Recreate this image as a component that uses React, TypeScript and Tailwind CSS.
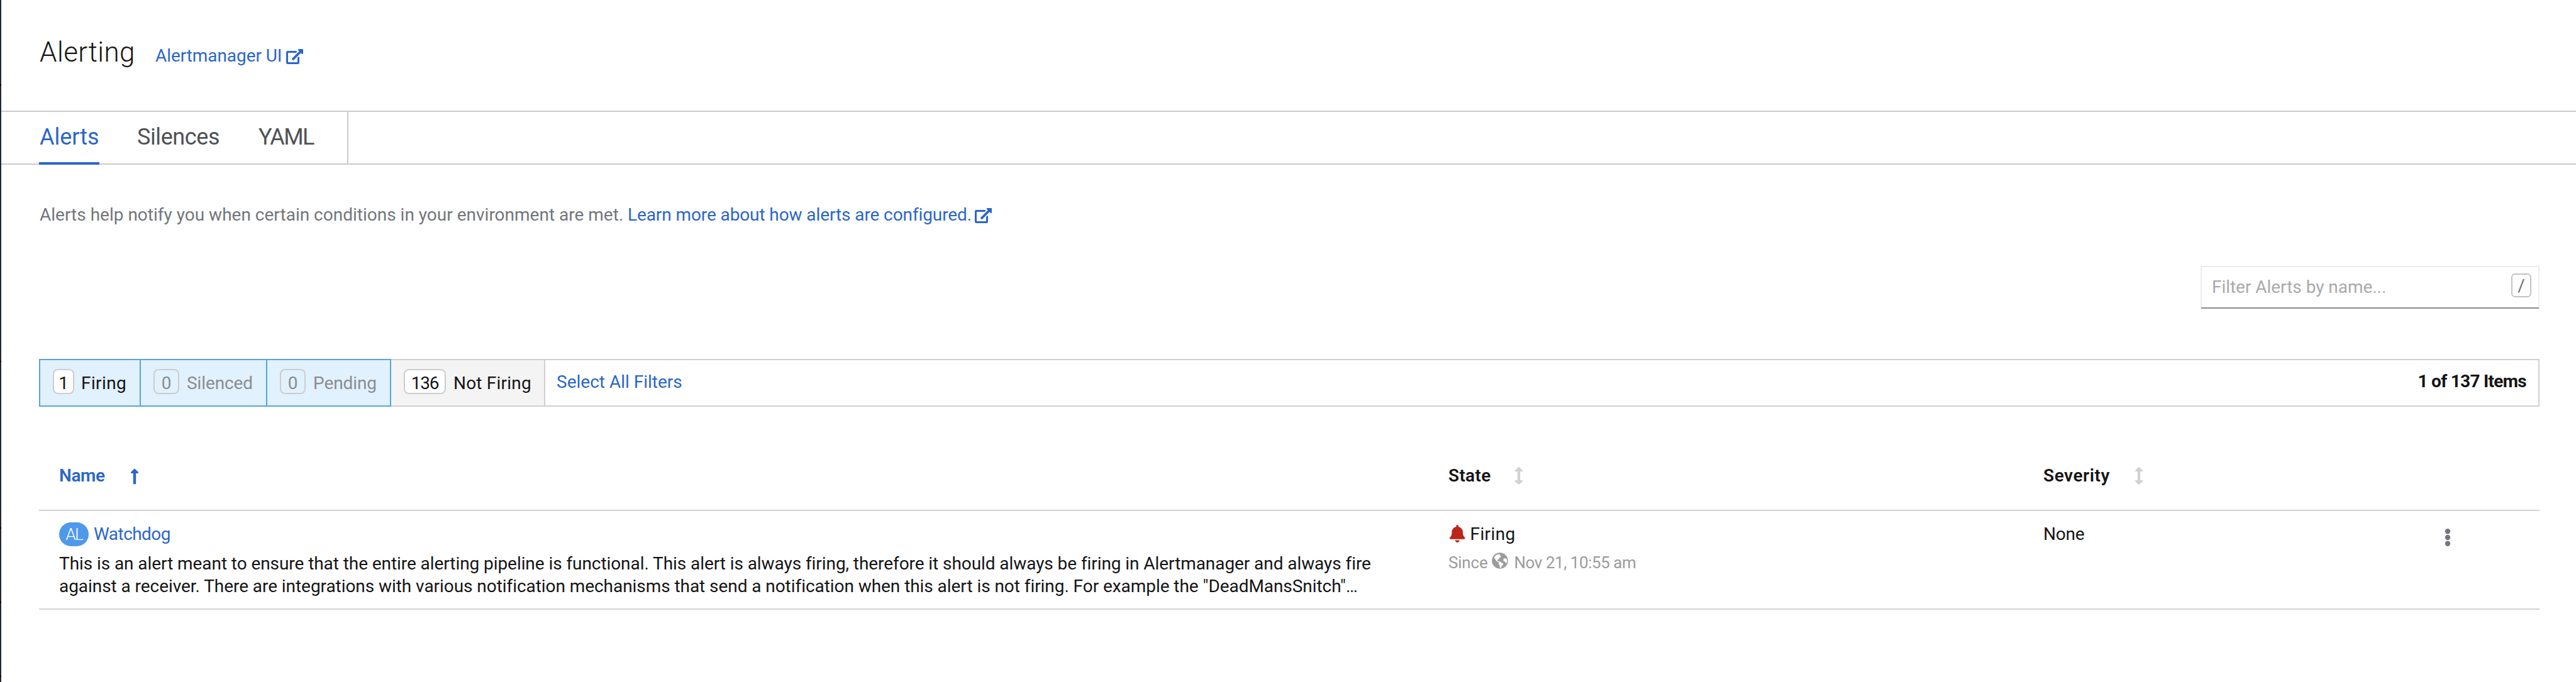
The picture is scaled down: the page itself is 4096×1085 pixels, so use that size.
import type { ReactNode } from 'react';
import { FaArrowsAltV, FaBell, FaLongArrowAltUp } from 'react-icons/fa';

function ExternalLinkIcon({ className }: { className: string }) {
  return (
    <svg viewBox="0 0 576 512" fill="currentColor" className={'h-[24px] w-[27px] shrink-0 ' + className}>
      <path d="M576 24v127.984c0 21.461-25.96 31.98-40.971 16.971l-35.707-35.709-243.523 243.523c-9.373 9.373-24.568 9.373-33.941 0l-22.627-22.627c-9.373-9.373-9.373-24.569 0-33.941L442.756 76.676l-35.703-35.705C391.982 25.9 402.656 0 424.024 0H552c13.255 0 24 10.745 24 24zM407.029 270.794l-16 16A23.999 23.999 0 0 0 384 303.765V448H64V128h264a24.003 24.003 0 0 0 16.97-7.029l16-16C376.089 89.851 365.381 64 344 64H48C21.49 64 0 85.49 0 112v352c0 26.51 21.49 48 48 48h352c26.51 0 48-21.49 48-48V287.764c0-21.382-25.852-32.09-40.971-16.97z" />
    </svg>
  );
}

function GlobeIcon() {
  return (
    <svg viewBox="0 0 26 26" className="ml-[6px] mt-[4px] h-[26px] w-[26px] shrink-0">
      <circle cx="13" cy="13" r="12.8" fill="#9c9c9c" />
      <path
        fill="#fff"
        d="M4.6 6.4 7 4l3.2-1.2 3.2.6-.6 1.6 1.8.2-.6 2.2-2.4 1 .2 1.6-2.4 1.4-.4 1.8 1.4.8 2.4.2 3.4 2.2 2.2 1-.6 2.4-1.6 1.2-.8 2.2-1.6 1.4-1-.8-.4-3.6-1.6-2 .4-2.4-2.6-1.4-2.2-2.2-1.8-3.4-.6 1.4-.2-1.6z"
      />
      <path fill="#fff" d="m18.6 10.6 2.2-1.4 2.4.4 1 2.2.2 3-1.4 2.2-1.2-.4-.6-2-2-.8-1-1.6z" />
    </svg>
  );
}

const badge = 'flex h-[40px] items-center justify-center rounded-[8px] border-2 border-[#cdcdcd] pt-[5px] leading-[36px] ';

function Filter({ count, label, cell, countClass, labelClass }: { count: string; label: string; cell: string; countClass: string; labelClass: string }) {
  return (
    <div className={'flex h-[76px] shrink-0 border-y-2 pt-[14px] ' + cell}>
      <span className={badge + countClass}>{count}</span>
      <span className={'leading-[45px] ' + labelClass}>{label}</span>
    </div>
  );
}

function Row({ className, children }: { className: string; children: ReactNode }) {
  return <div className={'flex w-[3976px] border-b-2 border-[#d2d2d2] ' + className}>{children}</div>;
}

export default function App() {
  return (
    <div className="flex h-[1085px] w-[4096px] overflow-hidden bg-white font-[Roboto,sans-serif] text-[28px] text-[#151515] whitespace-nowrap">
      <div className="flex w-[2px] shrink-0 flex-col bg-[#212830]">
        <div className="mt-[134px] h-[2px] bg-black" />
        <div className="mt-[438px] h-[2px] bg-black" />
        <div className="mt-[263px] h-[2px] bg-black" />
        <div className="mt-[116px] h-[2px] bg-black" />
        <div className="mt-[116px] h-[2px] bg-black" />
      </div>

      <div className="flex w-[4094px] flex-col">
        <header className="flex h-[176px] items-baseline pl-[61px] pt-[53px]">
          <h1 className="w-[184px] text-[44px] font-light leading-[60px] tracking-[0.4px]">Alerting</h1>
          <a className="flex text-[#2b66c9]">
            <span className="w-[208px] leading-[36px] tracking-[-0.08px]">Alertmanager UI</span>
            <ExternalLinkIcon className="mt-[7px]" />
          </a>
        </header>

        <nav className="flex h-[86px] border-y-2 border-[#cbcbcb] text-[36px] leading-[74px] text-[#4f5255]">
          <div className="flex w-[552px] shrink-0 border-r-2 border-[#cbcbcb] pl-[60px]">
            <div className="-mb-[2px] h-[84px] w-[96px] border-b-4 border-[#2b66c9] pl-[1px] pt-[3px] tracking-[-0.04px] text-[#2b66c9]">Alerts</div>
            <div className="ml-[60px] w-[131px] pt-[3px] tracking-[-0.4px]">Silences</div>
            <div className="ml-[62px] pt-[3px] tracking-[-1.6px]">YAML</div>
          </div>
        </nav>

        <p className="mt-[62px] flex h-[36px] pl-[61px] leading-[36px]">
          <span className="w-[935px] text-[#72767b]">Alerts help notify you when certain conditions in your environment are met.</span>
          <a className="flex text-[#2b66c9]">
            <span className="w-[552px] tracking-[-0.1px]">Learn more about how alerts are configured.</span>
            <ExternalLinkIcon className="mt-[7px]" />
          </a>
        </p>

        <div className="mt-[63px] ml-[3497px] flex h-[68px] w-[539px] border-2 border-[#ededed] border-b-[#8a8a8a] pl-[16px]">
          <span className="w-[476px] pt-[12px] leading-[40px] tracking-[-0.04px] text-[#aaaaaa]">Filter Alerts by name...</span>
          <kbd className="mt-[10px] flex h-[38px] w-[32px] justify-center rounded-[6px] border-2 border-[#c2c2c2] font-[Roboto,sans-serif] leading-[36px] text-[#6a6e73]">/</kbd>
        </div>

        <div className="mt-[80px] ml-[60px] flex h-[76px] w-[3976px]">
          <Filter count="1" label="Firing" cell="w-[162px] border-x-2 border-[#5aa4d9] bg-[#e1f1fe] pl-[20px]" countClass="w-[34px] bg-white" labelClass="ml-[11px] tracking-[0.4px]" />
          <Filter count="0" label="Silenced" cell="w-[201px] border-r-2 border-[#5aa4d9] bg-[#e1f1fe] pl-[20px] text-[#8b8d8f]" countClass="w-[41px]" labelClass="ml-[12px] tracking-[-0.1px]" />
          <Filter count="0" label="Pending" cell="w-[197px] border-r-2 border-[#5aa4d9] bg-[#e1f1fe] pl-[20px] text-[#8b8d8f]" countClass="w-[41px]" labelClass="ml-[12px] tracking-[-0.1px]" />
          <Filter count="136" label="Not Firing" cell="w-[245px] border-r-2 border-[#d0d0d0] bg-[#f4f4f4] pl-[20px]" countClass="w-[67px] bg-white tracking-[-1.2px]" labelClass="ml-[12px] tracking-[0.2px]" />
          <div className="flex flex-1 justify-between border-y-2 border-r-2 border-[#d0d0d0] pt-[14px] pl-[18px] pr-[19px] leading-[40px]">
            <a className="leading-[41px] text-[#2b66c9]">Select All Filters</a>
            <span className="font-bold tracking-[-0.7px]">1 of 137 Items</span>
          </div>
        </div>

        <div className="ml-[60px]">
          <Row className="h-[166px] pt-[92px] font-semibold leading-[36px]">
            <div className="flex w-[2241px] shrink-0 pl-[32px] text-[#2b66c9]">
              <span className="w-[113px] tracking-[-0.4px]">Name</span>
              <FaLongArrowAltUp className="mt-[5px] h-[28px] w-[14px]" />
            </div>
            <div className="flex w-[946px] shrink-0">
              <span className="w-[105px] tracking-[0.3px]">State</span>
              <FaArrowsAltV className="mt-[4px] h-[28px] w-[14px] text-[#d2d2d2]" />
            </div>
            <div className="flex">
              <span className="w-[145px] tracking-[0.55px]">Severity</span>
              <FaArrowsAltV className="mt-[4px] h-[28px] w-[14px] text-[#d2d2d2]" />
            </div>
          </Row>

          <Row className="h-[157px] pt-[18px]">
            <div className="w-[2241px] shrink-0 pl-[32px]">
              <div className="flex h-[38px]">
                <span className="flex h-[38px] w-[47px] justify-center rounded-[19px] bg-[#4f99ec] pl-[1px] text-[26px] font-light leading-[38px] tracking-[-1.5px] text-white">AL</span>
                <a className="ml-[8px] leading-[37px] tracking-[-0.55px] text-[#2b66c9]">Watchdog</a>
              </div>
              <p className="mt-[10px] leading-[36px]">
                <span className="block tracking-[-0.073px]">
                  This is an alert meant to ensure that the entire alerting pipeline is functional. This alert is always firing, therefore it should always be firing in Alertmanager and always fire
                </span>
                <span className="block tracking-[-0.06px]">
                  against a receiver. There are integrations with various notification mechanisms that send a notification when this alert is not firing. For example the "DeadMansSnitch"…
                </span>
              </p>
            </div>
            <div className="w-[946px] shrink-0">
              <div className="flex leading-[37px]">
                <FaBell className="mt-[4px] ml-[2px] h-[28px] w-[24.5px] text-[#bb2619]" />
                <span className="ml-[8px] tracking-[0.4px]">Firing</span>
              </div>
              <div className="mt-[7px] flex text-[26px] leading-[40px] text-[#9c9c9c]">
                <span className="tracking-[-0.2px]">Since</span>
                <GlobeIcon />
                <span className="ml-[10px] tracking-[-0.46px]">Nov 21, 10:55 am</span>
              </div>
            </div>
            <div className="w-[639px] shrink-0 leading-[37px] tracking-[-0.2px]">None</div>
            <svg viewBox="0 0 8 28" fill="#73767b" className="mt-[10px] h-[28px] w-[8px] overflow-visible">
              <circle cx="4" cy="4.3" r="4.2" />
              <circle cx="4" cy="14" r="4.2" />
              <circle cx="4" cy="23.7" r="4.2" />
            </svg>
          </Row>
        </div>
      </div>
    </div>
  );
}
